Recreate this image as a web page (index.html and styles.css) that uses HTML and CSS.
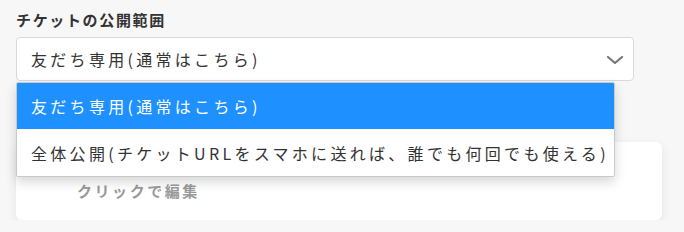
FILE: index.html
```html
<!DOCTYPE html>
<html lang="ja">
  <head>
    <meta charset="UTF-8" />
    <meta name="viewport" content="width=device-width, initial-scale=1.0" />
    <title>チケットの公開範囲</title>
    <link rel="stylesheet" href="styles.css">
  </head>
  <body>
    <div class="field">
      <label class="field-label">チケットの公開範囲</label>

      <!-- Select with open menu -->
      <div class="select">
        <span class="select-value">友だち専用(通常はこちら)</span>
        <svg class="select-arrow" width="18" height="10" viewBox="0 0 18 10">
          <path d="M2 2 L9 8 L16 2" fill="none" stroke="#777" stroke-width="2.2" stroke-linecap="round" stroke-linejoin="round" />
        </svg>
        <ul class="select-menu">
          <li class="select-option selected">友だち専用(通常はこちら)</li>
          <li class="select-option">全体公開(チケットURLをスマホに送れば、誰でも何回でも使える)</li>
        </ul>
      </div>
    </div>

    <div class="card">
      <p class="card-text">クリックで編集</p>
    </div>
  </body>
</html>
```

FILE: styles.css
```css
body {
  font-family: "Noto Sans CJK JP", "Noto Sans", sans-serif;
  background-color: #f7f7f7;
  margin: 0;
  padding: 0;
  color: #333;
}

.field {
  padding: 10px 16px 0;
  width: 618px;
}

.field-label {
  display: block;
  font-size: 15px;
  font-weight: bold;
  line-height: 20px;
  letter-spacing: 0.11em;
  color: #333;
  margin-bottom: 7px;
}

.select {
  position: relative;
  box-sizing: border-box;
  height: 44px;
  display: flex;
  align-items: center;
  padding: 0 14px;
  background-color: #fff;
  border: 1px solid #d9d9d9;
  border-radius: 4px;
}

.select-value {
  flex: 1;
  font-size: 16px;
  letter-spacing: 3.3px;
  color: #333;
}

.select-arrow {
  margin-right: -5px;
  margin-top: 1px;
}

.select-menu {
  position: absolute;
  top: 44px;
  left: -1px;
  width: 599px;
  box-sizing: border-box;
  margin: 0;
  padding: 0;
  list-style: none;
  background-color: #fff;
  border: 1px solid #c9c9c9;
  border-radius: 2px;
  box-shadow: 0 5px 12px rgba(0, 0, 0, 0.16);
  z-index: 10;
  overflow: hidden;
}

.select-option {
  height: 46px;
  display: flex;
  align-items: center;
  padding-left: 14px;
  font-size: 16px;
  letter-spacing: 3.3px;
  white-space: nowrap;
  color: #333;
}

.select-option:last-child {
  height: 47px;
}

.select-option.selected {
  background-color: #1e90ff;
  color: #fff;
}

.card {
  margin: 61px 0 0 16px;
  width: 646px;
  height: 78px;
  box-sizing: border-box;
  padding: 39px 0 0 61px;
  background-color: #fff;
  border-radius: 6px;
  box-shadow: 0 4px 12px rgba(0, 0, 0, 0.08);
}

.card-text {
  margin: 0;
  font-size: 15px;
  font-weight: bold;
  line-height: 20px;
  letter-spacing: 0.17em;
  color: #9a9a9a;
}
```
